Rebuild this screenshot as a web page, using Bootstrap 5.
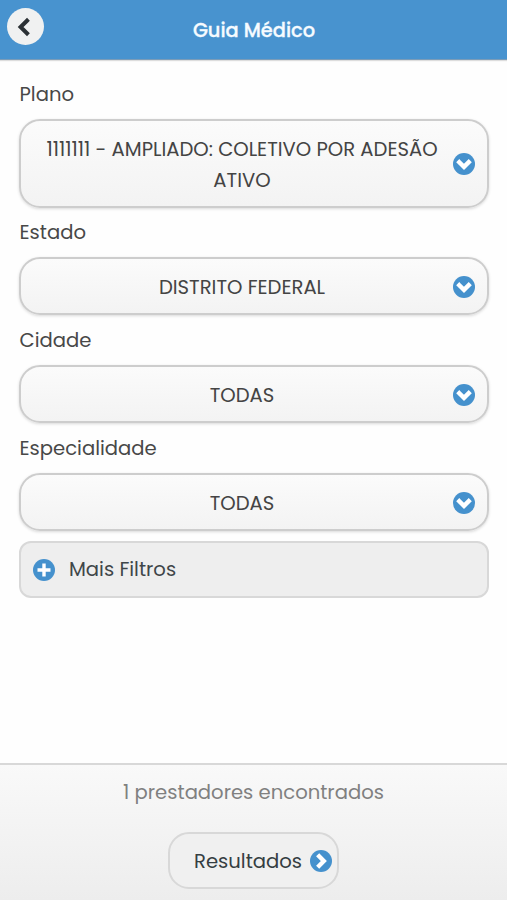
<!DOCTYPE html>
<html lang="pt-BR">
<head>
<meta charset="utf-8">
<meta name="viewport" content="width=device-width, initial-scale=1">
<title>Guia Médico</title>
<link rel="stylesheet" href="https://cdn.jsdelivr.net/npm/bootstrap@5.3.0/dist/css/bootstrap.min.css">
<style>
body,.btn{font-family:Poppins,Inter,"Open Sans",sans-serif;font-size:19.6px;line-height:31px}
body{color:#484848;background:#fefefe}
.topbar{height:60px;background:#4893cf;border-bottom:1px solid #7b9cb8;box-shadow:0 1px 1px #ddd}
.back{width:37px;height:37px;left:7px;top:8px;background:#f0f1f1}
.title{font-size:19.4px;font-weight:500;color:#f6fbff;line-height:31px;padding-top:1px;padding-left:1px;-webkit-text-stroke:.3px #f6fbff}
.form-area{padding:19px 18px 0 19px}
.field-label{height:32px;line-height:30px;margin-bottom:8px;padding-left:.5px}
.select-box{border:2px solid #cdcdcd;border-radius:21px;background:linear-gradient(#fbfbfb,#f3f3f3);box-shadow:0 1px 3px #00000026;color:#444;height:58px;margin-bottom:10px;padding:1px 12px 0 10px}
.select-box.tall{height:89px;margin-bottom:9px}
.choice{padding:1px 0 0 0}
.filters{height:57px;border:2px solid #d8d8d8;border-radius:12px;background:#eee;padding:0 12px;color:#3f4649}
.filters span{margin-left:14px}
.bottom{height:137px;border-top:2px solid #d8d8d8;background:linear-gradient(#f9f9f9,#ededed);color:#808080}
.result-btn{width:171px;height:57px;border:2px solid #d8d8d8;border-radius:21px;background:#f0f0f0;color:#353e42;margin-top:24px;padding:1px 5px 0 24px}
.result-btn span{padding-top:1px}
</style>
<script src="https://cdn.jsdelivr.net/npm/bootstrap@5.3.0/dist/js/bootstrap.bundle.min.js"></script>
</head>
<body class="vh-100 d-flex flex-column overflow-hidden">
<svg class="d-none"><defs>
<g id="chev"><circle cx="11" cy="11" r="11" fill="#4591cd"/><path d="M6.3 9.2 11 13.8 15.7 9.2" fill="none" stroke="#fff" stroke-width="4.4" stroke-linecap="square"/></g>
</defs></svg>
<header class="topbar position-relative d-flex align-items-center justify-content-center flex-shrink-0">
<button class="back btn p-0 border-0 rounded-circle position-absolute d-flex align-items-center justify-content-center" aria-label="Voltar">
<svg width="37" height="37" viewBox="0 0 37 37"><path d="M20 12.7 13.6 19 20 25.3" fill="none" stroke="#2b3135" stroke-width="4" stroke-linecap="square"/></svg></button>
<h1 class="title m-0">Guia Médico</h1>
</header>
<main class="form-area flex-grow-1">
<div class="field-label">Plano</div>
<button class="select-box tall btn w-100 d-flex align-items-center">
<span class="choice flex-grow-1">1111111 - AMPLIADO: COLETIVO POR ADESÃO ATIVO</span>
<svg class="flex-shrink-0" width="22" height="22"><use href="#chev"/></svg></button>
<div class="field-label">Estado</div>
<button class="select-box btn w-100 d-flex align-items-center"><span class="choice flex-grow-1">DISTRITO FEDERAL</span><svg width="22" height="22"><use href="#chev"/></svg></button>
<div class="field-label">Cidade</div>
<button class="select-box btn w-100 d-flex align-items-center"><span class="choice flex-grow-1">TODAS</span><svg width="22" height="22"><use href="#chev"/></svg></button>
<div class="field-label">Especialidade</div>
<button class="select-box btn w-100 d-flex align-items-center"><span class="choice flex-grow-1">TODAS</span><svg width="22" height="22"><use href="#chev"/></svg></button>
<button class="filters btn w-100 d-flex align-items-center"><svg width="22" height="22"><circle cx="11" cy="11" r="11" fill="#4591cd"/><path d="M11 4.5v13M4.5 11h13" stroke="#fff" stroke-width="3.4"/></svg><span>Mais Filtros</span></button>
</main>
<footer class="bottom d-flex flex-column align-items-center flex-shrink-0">
<div class="pt-2 mt-1">1 prestadores encontrados</div>
<button class="result-btn btn d-flex align-items-center justify-content-between"><span>Resultados</span><svg width="22" height="22"><g transform="rotate(-90 11 11)"><use href="#chev"/></g></svg></button>
</footer>
</body>
</html>
